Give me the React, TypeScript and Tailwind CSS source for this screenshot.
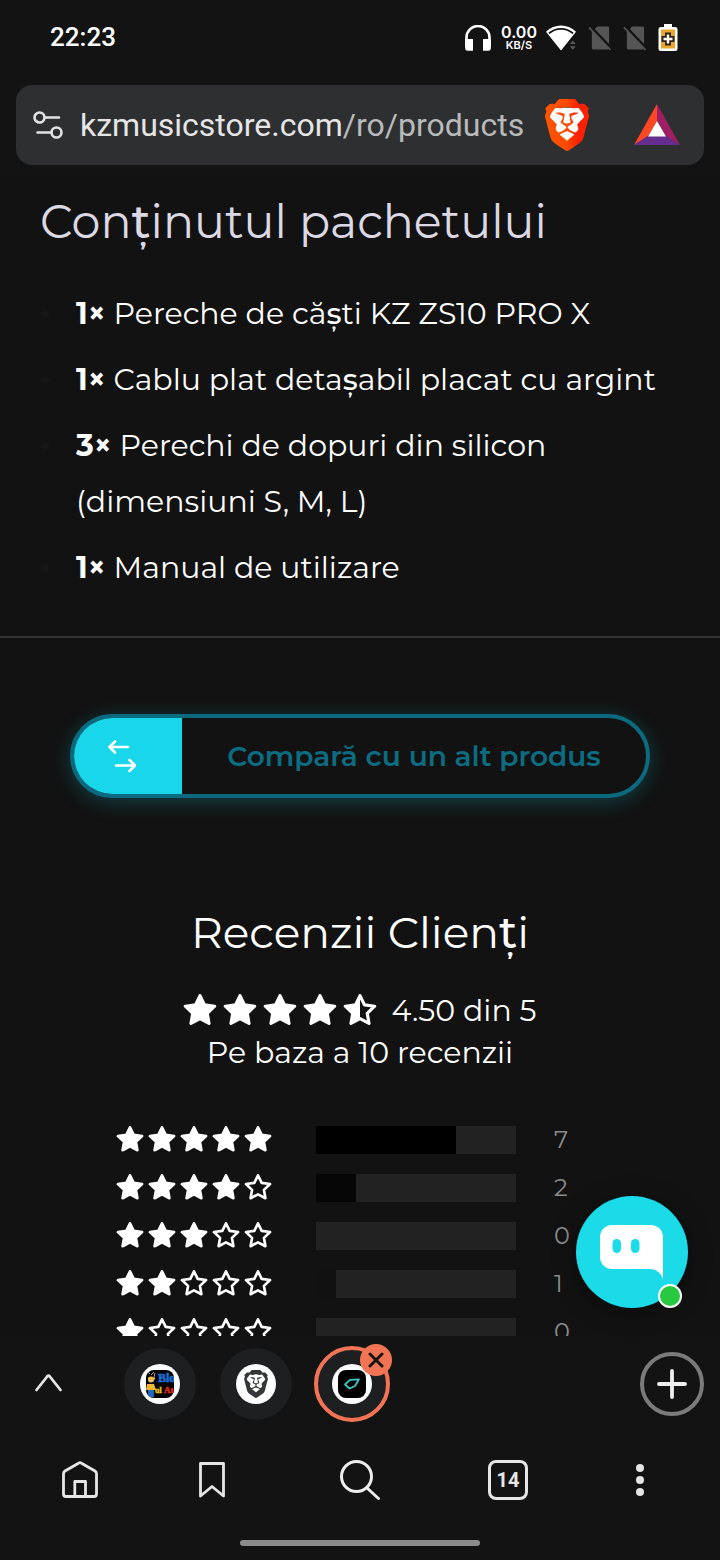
import React from 'react';
import { SiBrave } from 'react-icons/si';

const STAR_PATH =
  'M0-14.5L4.2-5.8 13.8-4.5 6.8 2.2 8.5 11.7 0 7.2-8.5 11.7-6.8 2.2-13.8-4.5-4.2-5.8Z';
const HALF_PATH = 'M0-14.5L0 7.2-8.5 11.7-6.8 2.2-13.8-4.5-4.2-5.8Z';

type StarKind = 'full' | 'half' | 'empty';

function Star({ kind, className }: { kind: StarKind; className: string }) {
  return (
    <svg viewBox="-16 -16 32 32" className={className} aria-hidden="true">
      <path
        d={STAR_PATH}
        fill={kind === 'full' ? '#fff' : 'none'}
        stroke="#fff"
        strokeWidth="3"
        strokeLinejoin="round"
      />
      {kind === 'half' && <path d={HALF_PATH} fill="#fff" />}
    </svg>
  );
}

/* Comma-below letters are set one step heavier than the text around them. */
function Romanian({ text }: { text: string }) {
  return (
    <>
      {text.split(/([țș])/).map((part, i) =>
        i % 2 ? (
          <span key={i} className="font-medium">
            {part}
          </span>
        ) : (
          part
        ),
      )}
    </>
  );
}

function StatusBar() {
  return (
    <div className="flex h-[85px] items-center justify-between pr-[42px] pb-[10px] pl-[50px] text-white">
      <span className="font-[Roboto] text-[26px] font-medium">22:23</span>
      <div className="flex items-center">
        <svg viewBox="0 0 26 26" className="h-[26px] w-[26px]" aria-hidden="true">
          <path d="M1.5 22V12.5a11.5 11.5 0 0 1 23 0V22" fill="none" stroke="#fff" strokeWidth="2.6" />
          <path d="M.2 14H8v11.8H2.6A2.4 2.4 0 0 1 .2 23.4ZM25.8 14H18v11.8h5.4a2.4 2.4 0 0 0 2.4-2.4Z" fill="#fff" />
        </svg>
        <div className="ml-[10px] flex w-9 flex-col items-center font-[Inter] font-semibold">
          <span className="text-[16px] leading-[14px]">0.00</span>
          <span className="text-[11px] leading-[12px]">KB/S</span>
        </div>
        <svg viewBox="0 0 30 26" className="ml-[9px] h-[26px] w-[30px]" aria-hidden="true">
          <path d="M0 6.8C8.5-1.6 21.5-1.6 30 6.8L15 25.5Z" fill="#fff" />
          <path d="M3 8.3C10 2.3 20 2.3 27 8.3" fill="none" stroke="#131313" strokeWidth="1.8" />
          <path d="M26.8 14.5l4 4.5h-8zM26.8 25.5l4-4.5h-8z" fill="#131313" stroke="#131313" strokeWidth="2" />
          <path d="M26.8 15.5l3 3.5h-6zM26.8 24.8l3-3.5h-6z" fill="#5a5a5a" />
        </svg>
        {[0, 1].map((slot) => (
          <svg key={slot} viewBox="0 0 24 26" className="ml-3 h-[26px] w-[23px]" aria-hidden="true">
            <path d="M9.5 1H20.5A1.5 1.5 0 0 1 22 2.5V23.5A1.5 1.5 0 0 1 20.5 25H5.5A1.5 1.5 0 0 1 4 23.5V7Z" fill="#555" />
            <path d="M3 1.5 24 23.5" stroke="#131313" strokeWidth="3" />
            <path d="M1 2 23.5 25.5" stroke="#555" strokeWidth="1.8" />
          </svg>
        ))}
        <svg viewBox="0 0 20 28" className="ml-3 h-[28px] w-[20px]" aria-hidden="true">
          <path d="M6 0h8v3h3a2.5 2.5 0 0 1 2.5 2.5v19A2.5 2.5 0 0 1 17 27H3a2.5 2.5 0 0 1-2.5-2.5v-19A2.5 2.5 0 0 1 3 3h3Z" fill="#fff" />
          <path d="M3 5.5h14v19H3Z" fill="#e8a72c" />
          <path d="M7 8.5h6v3.5h3.5v6H13v3.5H7V18H3.5v-6H7Z" fill="#2b2318" />
          <path d="M8.8 10.5h2.4v3.3h3.3v2.4h-3.3v3.3H8.8v-3.3H5.5v-2.4h3.3Z" fill="#fff" />
        </svg>
      </div>
    </div>
  );
}

function AddressBar() {
  return (
    <div className="mx-4 flex h-20 items-center rounded-2xl bg-[#2e2f31] pr-6 pl-4">
      <button type="button" aria-label="Informații site" className="shrink-0">
        <svg viewBox="0 0 32 30" className="h-[30px] w-8" fill="none" stroke="#e3e3e3" strokeWidth="2.6" strokeLinecap="round">
          <circle cx="7.5" cy="7.5" r="5" />
          <path d="M13 7.5H27M5.5 22.5H19" />
          <circle cx="24.5" cy="22.5" r="5" />
        </svg>
      </button>
      <button
        type="button"
        className="ml-4 min-w-0 flex-1 overflow-hidden text-left font-[Roboto] text-[32px] leading-10 whitespace-nowrap text-[#b9babb]"
      >
        <span className="text-[#e6e6e6]">kzmusicstore.com</span>/ro/products
      </button>
      <button type="button" aria-label="Brave Shields" className="ml-4 shrink-0">
        <svg viewBox="1.5 0 21 24" className="h-[52px] w-[46px]">
          <defs>
            <linearGradient id="shield" x1="0" x2="1">
              <stop offset="0" stopColor="#ff5601" />
              <stop offset=".5" stopColor="#ff4a00" />
              <stop offset=".75" stopColor="#ff2001" />
              <stop offset="1" stopColor="#ff2001" />
            </linearGradient>
          </defs>
          <path d="M5 4h14l1 5-4 9-4 3-4-3-4-9Z" fill="#fff" />
          <SiBrave width="24" height="24" size={24} style={{ fill: 'url(#shield)' }} />
        </svg>
      </button>
      <button type="button" aria-label="Brave Rewards" className="ml-11 shrink-0">
        <svg viewBox="0 0 46 42" className="h-[42px] w-[46px]">
          <path d="M23 0 0 41 14 32 23 17Z" fill="#ff4724" />
          <path d="M23 0 46 41 32 32 23 17Z" fill="#9e1f63" />
          <path d="M0 41h46L32 32H14Z" fill="#662d91" />
          <path d="M23 17 32 32.5H14Z" fill="#fff" />
        </svg>
      </button>
    </div>
  );
}

const packageItems = [
  { qty: '1×', text: 'Pereche de căști KZ ZS10 PRO X' },
  { qty: '1×', text: 'Cablu plat detașabil placat cu argint' },
  { qty: '3×', text: 'Perechi de dopuri din silicon (dimensiuni S, M, L)' },
  { qty: '1×', text: 'Manual de utilizare' },
];

function PackageContents() {
  return (
    <section className="shrink-0 border-b-2 border-[#333] px-10 pt-3 pb-10">
      <h2 className="text-[46px] leading-[60px] font-normal text-[#dcd9e4]">
        <Romanian text="Conținutul pachetului" />
      </h2>
      <ul className="mt-[34px] flex flex-col gap-[10px] text-[30px] leading-[56px] text-white">
        {packageItems.map((item) => (
          <li key={item.text} className="flex">
            <span className="mt-6 mr-6 ml-px h-2 w-2 shrink-0 rounded-full bg-[#161616]" aria-hidden="true" />
            <p className="pl-[3px]">
              <strong className="font-bold">{item.qty}</strong> <Romanian text={item.text} />
            </p>
          </li>
        ))}
      </ul>
    </section>
  );
}

function CompareButton() {
  return (
    <button
      type="button"
      className="mx-[70px] mt-[76px] flex h-[84px] shrink-0 items-stretch overflow-hidden rounded-full border-4 border-[#0c6a80] bg-[#121212] shadow-[0_4px_20px_rgba(24,200,225,0.25)]"
    >
      <span className="flex w-[108px] shrink-0 items-center justify-center bg-[#19d7ea] pr-3">
        <svg viewBox="0 0 28 34" className="h-[34px] w-7" fill="none" stroke="#fff" strokeWidth="2.6" strokeLinecap="round" strokeLinejoin="round" aria-hidden="true">
          <path d="M20 8H2M7 2.5 1.5 8 7 13.5M8 26.5H26M21.5 21 27 26.5 21.5 32" />
        </svg>
      </span>
      <span className="flex flex-1 items-center justify-center text-[28px] font-semibold whitespace-nowrap text-[#0c6c82]">
        Compară cu un alt produs
      </span>
    </button>
  );
}

const ratings = [
  { stars: 5, count: 7, share: 70, fill: 'bg-black' },
  { stars: 4, count: 2, share: 20, fill: 'bg-[#060606]' },
  { stars: 3, count: 0, share: 0, fill: 'bg-black' },
  { stars: 2, count: 1, share: 10, fill: 'bg-[#111]' },
  { stars: 1, count: 0, share: 0, fill: 'bg-black' },
];

function Reviews() {
  const summary: StarKind[] = ['full', 'full', 'full', 'full', 'half'];
  return (
    <section className="mt-[104px] flex shrink-0 flex-col items-center text-white">
      <h2 className="text-[44px] leading-[60px] font-normal">
        <Romanian text="Recenzii Clienți" />
      </h2>
      <div className="mt-7 flex items-center gap-[14px]">
        <div className="flex gap-[6px]">
          {summary.map((kind, i) => (
            <Star key={i} kind={kind} className="h-[34px] w-[34px]" />
          ))}
        </div>
        <span className="text-[30px] leading-[42px]">4.50 din 5</span>
      </div>
      <p className="text-[30px] leading-[42px]">Pe baza a 10 recenzii</p>
      <div className="mt-[42px] w-full">
        {ratings.map((r) => (
          <div key={r.stars} className="mx-auto flex h-12 w-[488px] items-center">
            <div className="flex gap-1">
              {[1, 2, 3, 4, 5].map((n) => (
                <Star key={n} kind={n <= r.stars ? 'full' : 'empty'} className="h-7 w-7" />
              ))}
            </div>
            <div className="ml-11 h-7 w-[200px] bg-[#222]">
              <div className={`h-full ${r.fill}`} style={{ width: `${r.share}%` }} />
            </div>
            <span className="ml-[38px] text-[24px] text-[#8c8c8c]">{r.count}</span>
          </div>
        ))}
      </div>
    </section>
  );
}

function ChatButton() {
  return (
    <button
      type="button"
      aria-label="Chat"
      className="absolute right-8 bottom-7 h-28 w-28 rounded-full bg-[#1bdbe8] shadow-[0_4px_24px_rgba(0,0,0,0.4)]"
    >
      <svg viewBox="0 0 112 112" className="h-28 w-28">
        <path d="M36 29H75A12 12 0 0 1 87 41V83C84.5 76 80 73 73 73H36A12 12 0 0 1 24 61V41A12 12 0 0 1 36 29Z" fill="#fff" />
        <rect x="36.5" y="43" width="8.5" height="14" rx="4.2" fill="#1bdbe8" />
        <rect x="55" y="43" width="8.5" height="14" rx="4.2" fill="#1bdbe8" />
        <circle cx="94" cy="100" r="11" fill="#28c940" stroke="#fff" strokeWidth="2" />
      </svg>
    </button>
  );
}

function TabStrip() {
  return (
    <div className="flex h-24 items-center pr-4 pl-8">
      <button type="button" aria-label="Extinde filele" className="mr-[60px]">
        <svg viewBox="0 0 32 24" className="h-6 w-8" fill="none" stroke="#e6e6e6" strokeWidth="2.8" strokeLinecap="round" strokeLinejoin="round">
          <path d="M4.5 18 15.2 4.5Q16.5 3 17.8 4.5L28.5 18" />
        </svg>
      </button>
      <button type="button" aria-label="Filă 1" className="flex h-[72px] w-[72px] items-center justify-center rounded-full bg-[#1e1f21]">
        <span className="flex h-10 w-10 items-center justify-center rounded-full bg-white">
          <svg viewBox="0 0 28 28" className="h-7 w-7 overflow-hidden rounded-lg bg-black font-[Liberation_Serif] font-bold">
            <circle cx="5" cy="9.5" r="3" fill="#e7bd87" />
            <path d="M4 4 2 2M5 5 8 2M8 7 9 3" stroke="#aaa" strokeWidth="1" />
            <path d="M2 7.5h7v2H2Z" fill="#f0c020" />
            <path d="M1 14h7l2 6H0Z" fill="#f2b632" />
            <path d="M2 20h6v7H2Z" fill="#2468bd" />
            <text x="12" y="12" fill="#1a6fd6" stroke="#1a6fd6" strokeWidth=".6" fontSize="12">Blo</text>
            <text x="9" y="23" fill="#f2c51b" stroke="#f2c51b" strokeWidth=".4" fontSize="8">ul</text>
            <text x="18" y="23" fill="#e3281c" stroke="#e3281c" strokeWidth=".5" fontSize="9">At</text>
          </svg>
        </span>
      </button>
      <button type="button" aria-label="Filă Brave" className="ml-6 flex h-[72px] w-[72px] items-center justify-center rounded-full bg-[#1e1f21]">
        <span className="flex h-10 w-10 items-center justify-center rounded-full bg-white">
          <SiBrave size={28} color="#343639" />
        </span>
      </button>
      <div className="relative ml-[22px]">
        <button type="button" aria-label="Filă KZ Music Store" className="flex h-[76px] w-[76px] items-center justify-center rounded-full border-4 border-[#f27454] bg-[#1e1f21]">
          <span className="flex h-10 w-10 items-center justify-center rounded-full bg-white">
            <svg viewBox="0 0 28 28" className="h-7 w-7 rounded-lg bg-black" fill="none" stroke="#3fc5c2" strokeWidth="1.8" strokeLinejoin="round">
              <path d="M7 14.5 12 9.8 21 9.3 17 16 11.5 18.5Z" />
            </svg>
          </span>
        </button>
        <button type="button" aria-label="Închide fila" className="absolute -top-[2px] -right-[2px] flex h-8 w-8 items-center justify-center rounded-full bg-[#f27454]">
          <svg viewBox="0 0 16 16" className="h-4 w-4" stroke="#191412" strokeWidth="3" strokeLinecap="round">
            <path d="M2 2 14 14M14 2 2 14" />
          </svg>
        </button>
      </div>
      <button type="button" aria-label="Filă nouă" className="ml-auto flex h-16 w-16 items-center justify-center rounded-full border-4 border-[#7b7b7b]">
        <svg viewBox="0 0 32 32" className="h-8 w-8" stroke="#eee" strokeWidth="3.8" strokeLinecap="round">
          <path d="M3 16H29M16 3V29" />
        </svg>
      </button>
    </div>
  );
}

function BottomNav() {
  return (
    <nav className="flex h-24 items-center justify-between px-[60px]">
      <button type="button" aria-label="Acasă">
        <svg viewBox="0 0 40 40" className="h-10 w-10" fill="none" stroke="#e6e6e6" strokeWidth="2.8" strokeLinejoin="round">
          <path d="M3.5 13.5Q3.5 12 5 11L18.5 3.2Q20 2.2 21.5 3.2L35 11Q36.5 12 36.5 13.5V34Q36.5 36.5 34 36.5H6Q3.5 36.5 3.5 34ZM14.8 36V21.5H25.5V36" />
        </svg>
      </button>
      <button type="button" aria-label="Marcaje">
        <svg viewBox="0 0 40 40" className="h-10 w-10" fill="none" stroke="#e6e6e6" strokeWidth="2.8" strokeLinejoin="round">
          <path d="M8.5 3.5H31.5V36L20 26.5 8.5 36Z" />
        </svg>
      </button>
      <button type="button" aria-label="Căutare" className="flex w-[72px] justify-center">
        <svg viewBox="0 0 44 44" className="h-11 w-11" fill="none" stroke="#eee" strokeWidth="3" strokeLinecap="round">
          <circle cx="18.5" cy="18.5" r="15" />
          <path d="M29 30 40.5 40.5" />
        </svg>
      </button>
      <button type="button" aria-label="14 file" className="flex h-10 w-10 items-center justify-center rounded-lg border-3 border-[#e6e6e6] font-[Roboto] text-[20px] font-bold text-[#e6e6e6]">
        14
      </button>
      <button type="button" aria-label="Meniu" className="flex w-10 flex-col items-center gap-1">
        <span className="h-2 w-2 rounded-full bg-[#e6e6e6]" />
        <span className="h-2 w-2 rounded-full bg-[#e6e6e6]" />
        <span className="h-2 w-2 rounded-full bg-[#e6e6e6]" />
      </button>
    </nav>
  );
}

export default function App() {
  return (
    <div className="flex h-screen flex-col overflow-hidden bg-[#131313] font-[Montserrat,Inter,sans-serif]">
      <header className="shrink-0 pb-[15px]">
        <StatusBar />
        <AddressBar />
      </header>
      <div className="relative min-h-0 flex-1">
        <main className="flex h-full flex-col overflow-y-auto bg-[#121212] [scrollbar-width:none]">
          <PackageContents />
          <CompareButton />
          <Reviews />
        </main>
        <ChatButton />
      </div>
      <footer className="shrink-0">
        <TabStrip />
        <BottomNav />
        <div className="flex h-8 justify-center pt-3">
          <span className="h-[6px] w-60 rounded-full bg-[#8b8b8b]" />
        </div>
      </footer>
    </div>
  );
}
